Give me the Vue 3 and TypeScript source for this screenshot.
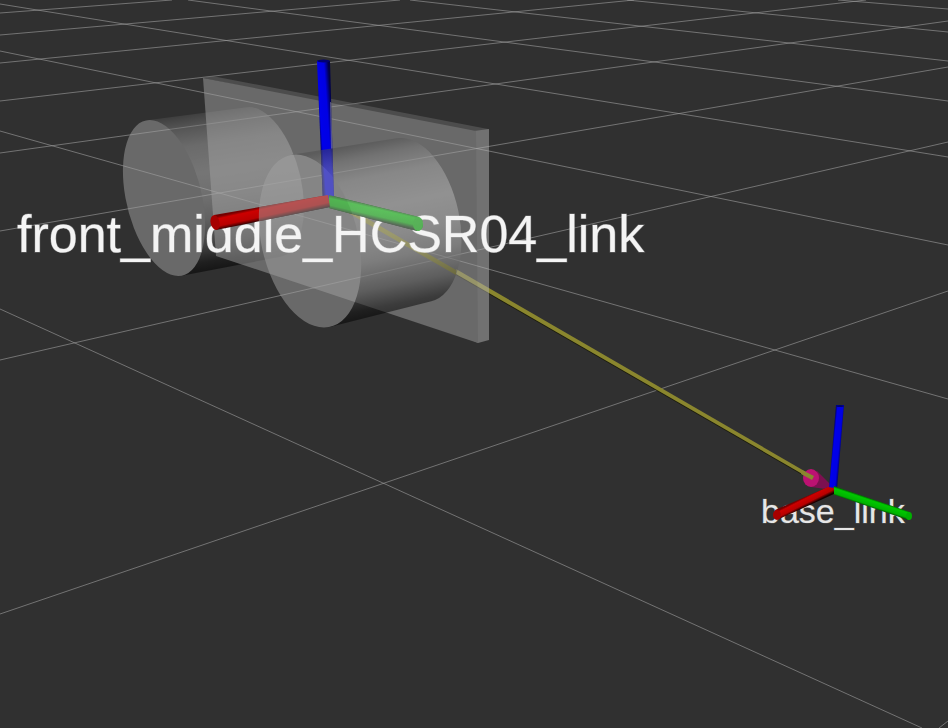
<script setup lang="ts">
interface Disc { cx: number; cy: number; xx: number; yy: number; xy: number }
interface Barrel { front: Disc; back: Disc; top: number; bottom: number }
interface Bar { id: string; hue: string; points: string; from: number[]; to: number[] }

const grid: number[][] = [
  [939, 728, 948, 721], [0, 614, 948, 291], [0, 360, 948, 142], [0, 231, 948, 67],
  [0, 153, 948, 21], [0, 101, 866, 0], [0, 63, 634, 0], [0, 35, 400, 0], [0, 13, 172, 0],
  [0, 309, 922, 728], [0, 131, 948, 399], [0, 51, 948, 245], [0, 4, 948, 157],
  [188, 0, 948, 101], [410, 0, 948, 61], [627, 0, 948, 32], [838, 0, 948, 9],
]

const rear: Barrel = {
  front: { cx: 164, cy: 198, xx: 1697, yy: 6084, xy: 1110 },
  back: { cx: 263, cy: 182, xx: 1681, yy: 5625, xy: 1050 },
  top: -0.13,
  bottom: -0.19,
}
const near: Barrel = {
  front: { cx: 310, cy: 241, xx: 2621, yy: 7482, xy: 1211 },
  back: { cx: 413, cy: 220, xx: 2352, yy: 6724, xy: 984 },
  top: -0.16,
  bottom: -0.25,
}

// Point where a line of the given slope touches the disc, on its upper or lower side.
function tangent(d: Disc, slope: number, side: number): string {
  const x = d.xx * slope - d.xy
  const y = d.xy * slope - d.yy
  const k = side / Math.sqrt(x * slope - y)
  return `${(d.cx + x * k).toFixed(2)} ${(d.cy + y * k).toFixed(2)}`
}

function radii(d: Disc): string {
  const mean = (d.xx + d.yy) / 2
  const half = (d.yy - d.xx) / 2
  const r = Math.hypot(half, d.xy)
  const turn = (-Math.atan2(d.xy, half) * 90) / Math.PI
  return `${Math.sqrt(mean - r).toFixed(2)} ${Math.sqrt(mean + r).toFixed(2)} ${turn.toFixed(2)}`
}

// The straight closing side lies under the front cap, which is painted after the body.
function bodyPath(b: Barrel): string {
  return `M${tangent(b.front, b.top, 1)} L${tangent(b.back, b.top, 1)} ` +
    `A${radii(b.back)} 0 1 ${tangent(b.back, b.bottom, -1)} L${tangent(b.front, b.bottom, -1)}Z`
}

function capPath(d: Disc): string {
  const a = tangent(d, 0, 1)
  const b = tangent(d, 0, -1)
  return `M${a} A${radii(d)} 0 1 ${b} A${radii(d)} 0 1 ${a}Z`
}

const sensorBars: Bar[] = [
  { id: 'sz', hue: 'blue', points: '317,61 330,61 334,203 323,203', from: [319, 130], to: [333, 129] },
  { id: 'sy', hue: 'green', points: '329,195 419,217 417,231 329,208', from: [374, 206], to: [371, 219] },
  { id: 'sx', hue: 'red', points: '214,215 328,195 330,207 216,230', from: [270, 205], to: [273, 219] },
]
const baseBars: Bar[] = [
  { id: 'bz', hue: 'blue', points: '836,405 844,405 837,489 829,488', from: [832, 446], to: [842, 447] },
  { id: 'by', hue: 'green', points: '834,486 910,512 908,520 832,494', from: [872, 499], to: [869, 508] },
  { id: 'bx', hue: 'red', points: '775,510 828,487 834,488 834,494 779,519', from: [801, 499], to: [805, 507] },
]
const allBars = [...sensorBars, ...baseBars]

const shades: Record<string, string[]> = {
  blue: ['#000068', '#0000ea', '#0000e4', '#000048'],
  green: ['#006a00', '#00c800', '#00b400', '#002400'],
  red: ['#740000', '#cc0000', '#b80000', '#180000'],
}
</script>

<template>
  <main class="viewport">
    <svg class="scene" viewBox="0 0 948 728" preserveAspectRatio="xMidYMid slice" role="img" aria-label="front_middle_HCSR04_link base_link">
      <defs>
        <linearGradient v-for="b in allBars" :id="b.id" :key="b.id" gradientUnits="userSpaceOnUse"
          :x1="b.from[0]" :y1="b.from[1]" :x2="b.to[0]" :y2="b.to[1]">
          <stop offset="0" :stop-color="shades[b.hue][0]" />
          <stop offset="0.18" :stop-color="shades[b.hue][1]" />
          <stop offset="0.68" :stop-color="shades[b.hue][2]" />
          <stop offset="1" :stop-color="shades[b.hue][3]" />
        </linearGradient>
        <linearGradient id="rear" gradientUnits="userSpaceOnUse" x1="202" y1="113" x2="225" y2="267">
          <stop offset="0" stop-color="#505050" />
          <stop offset="0.08" stop-color="#7c7c7c" />
          <stop offset="0.2" stop-color="#a6a6a6" />
          <stop offset="0.38" stop-color="#bababa" />
          <stop offset="0.55" stop-color="#acacac" />
          <stop offset="0.68" stop-color="#929292" />
          <stop offset="0.84" stop-color="#545454" />
          <stop offset="0.95" stop-color="#101010" />
          <stop offset="1" stop-color="#000000" />
        </linearGradient>
        <linearGradient id="near" gradientUnits="userSpaceOnUse" x1="350" y1="146" x2="384" y2="315">
          <stop offset="0" stop-color="#505050" />
          <stop offset="0.08" stop-color="#7c7c7c" />
          <stop offset="0.2" stop-color="#a6a6a6" />
          <stop offset="0.38" stop-color="#bababa" />
          <stop offset="0.55" stop-color="#acacac" />
          <stop offset="0.68" stop-color="#929292" />
          <stop offset="0.84" stop-color="#545454" />
          <stop offset="0.95" stop-color="#101010" />
          <stop offset="1" stop-color="#000000" />
        </linearGradient>
        <clipPath id="sensor-axes">
          <polygon v-for="b in sensorBars" :key="b.id" :points="b.points" />
          <ellipse cx="418" cy="224" rx="5" ry="7" />
        </clipPath>
      </defs>

      <g class="grid">
        <line v-for="(l, i) in grid" :key="i" :x1="l[0]" :y1="l[1]" :x2="l[2]" :y2="l[3]" />
      </g>

      <g class="glass">
        <path :d="bodyPath(rear)" fill="url(#rear)" />
        <path class="face" :d="capPath(rear.front)" />
      </g>

      <polygon class="arrow-edge" points="456,271 456,275 811,480 813,477" />
      <polygon class="arrow" points="456,269 456,274 811,479 813,476" />

      <g class="glass">
        <polygon class="lid" points="203,78 212,76 488,129 489,135 476,135" />
        <polygon class="side" points="474,131 489,129 489,340 478,343 474,341" />
        <polygon class="face" points="203,78 476,131 478,343 216,256" />
      </g>

      <polygon class="arrow" points="332,198 331,203 456,275 456,270" />

      <g class="glass">
        <path :d="bodyPath(near)" fill="url(#near)" />
        <path class="face" :d="capPath(near.front)" />
      </g>

      <text class="label label-sensor" x="17" y="252">front_middle_HCSR04_link</text>

      <polygon v-for="b in sensorBars" :key="b.id" :points="b.points" :fill="`url(#${b.id})`" />
      <ellipse cx="323.500" cy="61" rx="6.500" ry="1.500" fill="#000070" />
      <ellipse cx="418" cy="224" rx="5" ry="7" fill="#00b400" />
      <ellipse cx="215" cy="222.500" rx="4.500" ry="7.500" fill="#a60000" transform="rotate(-12 215 222)" />

      <g class="glass" clip-path="url(#sensor-axes)">
        <polygon class="face" points="330,102 335,103 335,152 331,152" />
        <path :d="bodyPath(near)" fill="url(#near)" />
        <path class="face" :d="capPath(near.front)" />
      </g>

      <text class="label label-base" x="761" y="523">base_link</text>

      <polygon points="817,471 833,487 833,490 811,487" fill="#7c1050" />
      <ellipse cx="811" cy="478" rx="8" ry="9" fill="#bc1272" />
      <polygon class="arrow" points="802,470 801,474 812,480 814,476" />

      <polygon v-for="b in baseBars" :key="b.id" :points="b.points" :fill="`url(#${b.id})`" />
      <ellipse cx="840" cy="406" rx="4" ry="1" fill="#000070" />
      <ellipse cx="909" cy="516" rx="3" ry="4" fill="#00b000" />
      <ellipse cx="777" cy="515" rx="4" ry="5" fill="#a80000" />
    </svg>
  </main>
</template>

<style>
body {
  margin: 0;
  background: #303030;
}
</style>

<style scoped>
.viewport {
  display: flex;
  height: 100vh;
  background: #303030;
  overflow: hidden;
}

.scene {
  flex: 1;
  min-width: 0;
  height: 100%;
}

.grid {
  stroke: #a0a0a0;
  stroke-opacity: 0.6;
  stroke-width: 1;
}

.glass {
  opacity: 0.5;
}

.face {
  fill: #a2a2a2;
}

.side {
  fill: #b2b2b2;
}

.lid {
  fill: #686868;
}

.arrow {
  fill: #8a862e;
}

.arrow-edge {
  fill: #1c1c0c;
}

.label {
  font-family: "Liberation Sans", Arial, sans-serif;
  fill: #f4f4f4;
  stroke: #f4f4f4;
  stroke-width: 1px;
  stroke-opacity: 0.3;
}

.label-sensor {
  font-size: 52px;
}

.label-base {
  font-size: 34px;
  fill: #e6e6e6;
  stroke-opacity: 0.2;
}
</style>
